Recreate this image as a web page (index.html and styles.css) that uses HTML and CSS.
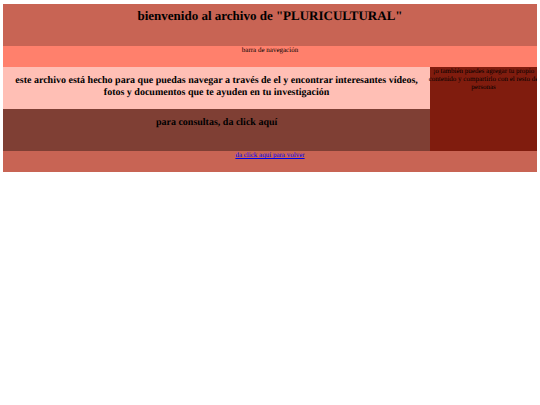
FILE: index.html
```html
<!DOCTYPE html>
<html lang="es">
<head>
    <meta charset="UTF-8">
    <meta name="viewport" content="width=device-width, initial-scale=1.0">
    <title>Pluricultural</title>
    <link rel="stylesheet" href="styles.css">
</head>
<body>
    <div class="contenedor">
        <header class="header">
            <h1>bienvenido al archivo de "PLURICULTURAL"</h1>
        </header>
        <nav class="navbar">barra de navegación</nav>
        <main class="principal">
            <h2>este archivo está hecho para que puedas navegar a través de el y encontrar interesantes vídeos, fotos y documentos que te ayuden en tu investigación</h2>
        </main>
        <aside class="sidebar">
            <p>¡o también puedes agregar tu propio contenido y compartirlo con el resto de personas</p>
        </aside>
        <section class="consultas">
            <h2>para consultas, da click aquí</h2>
        </section>
        <footer class="footer">
            <a href="#">da click aquí para volver</a>
        </footer>
    </div>
</body>
</html>
```

FILE: styles.css
```css
body {
    margin: 4px 3px;
    font-family: "Liberation Serif", "Times New Roman", serif;
    font-size: 7px;
    line-height: 8px;
    color: black;
    text-rendering: geometricPrecision;
}

.contenedor {
    display: grid;
    grid-template-columns: 4fr 1fr;
    grid-template-rows:
        minmax(42px, auto)
        minmax(21px, auto)
        minmax(42px, auto)
        minmax(42px, auto)
        minmax(21px, auto);
    grid-template-areas:
        "header header"
        "navbar navbar"
        "principal sidebar"
        "consultas sidebar"
        "footer footer";
    text-align: center;
}

h1 {
    margin: 4px 0;
    font-size: 13px;
    line-height: 16px;
}

h2 {
    margin: 8px;
    font-size: 10px;
    line-height: 12px;
}

.header {
    grid-area: header;
    background-color: #c86454;
}

.navbar {
    grid-area: navbar;
    background-color: #ff806c;
}

.principal {
    grid-area: principal;
    background-color: #ffbfb5;
}

.sidebar {
    grid-area: sidebar;
    background-color: #801c0e;
}

.sidebar p {
    margin: 0 -2px;
}

.consultas {
    grid-area: consultas;
    background-color: #7f3f34;
}

.footer {
    grid-area: footer;
    background-color: #c86454;
}

a {
    color: #0000ee;
}
```
